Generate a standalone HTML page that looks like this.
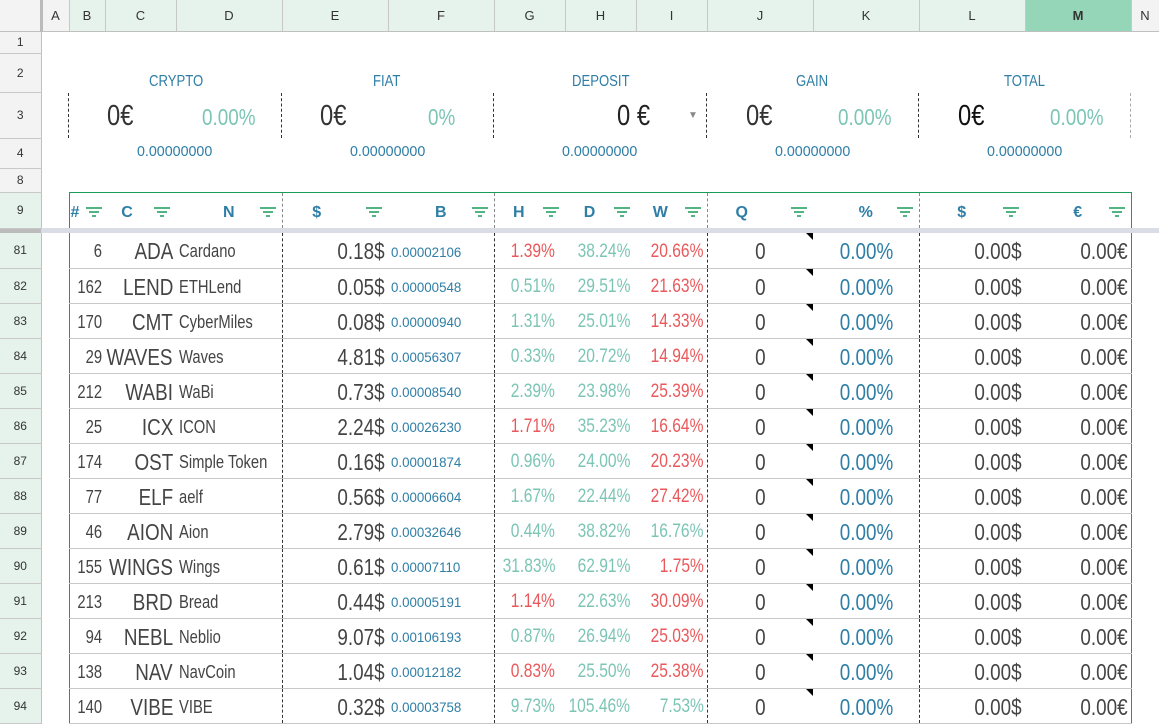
<!DOCTYPE html>
<html><head><meta charset="utf-8"><style>
*{box-sizing:border-box;margin:0;padding:0}
body{width:1159px;height:710px;overflow:hidden;background:#fff;font-family:"Liberation Sans",sans-serif;color:#444;position:relative}
table{border-collapse:collapse;table-layout:fixed;width:1159px}
td{padding:0 3px;white-space:nowrap;overflow:visible;vertical-align:middle}
i{font-style:normal;display:inline-block;transform:scaleX(.82)}
.r i{transform-origin:right center;margin-left:-40px}.l i{transform-origin:left center}.ce i{transform-origin:center}
.ch td{height:31px;background:#e6f3ec;border-right:1px solid #c8c8c8;border-bottom:1px solid #c0c0c0;text-align:center;font-size:13px;color:#333}
.ch td.g{background:#f3f3f3}
.ch td.m{background:#96d6b8;font-weight:bold}
td.rh{background:#f3f3f3;border-right:1px solid #c0c0c0;border-bottom:1px solid #c8c8c8;text-align:center;font-size:12px;color:#333;padding:0}
td.rg{background:#e6f3ec}
.dl{border-left:1px dashed #333}
.hd td.h{color:#2e7ea6;font-weight:bold;font-size:16px;text-align:center;position:relative;border-top:1px solid #1a9c5a;padding-top:6px}
.f{display:inline-block;width:16px;height:10px;position:absolute;right:6px;top:14px}
.d td.c{border-bottom:1px solid #c8c8c8;font-size:23px;padding-top:3px}
.r{text-align:right}.l{text-align:left}.ce{text-align:center}
.b{font-size:14px!important;color:#2e7ea6}
.b i{transform:scaleX(.95)}
.n{font-size:18px!important}
.gr{color:#7cc5b5;font-size:19px!important}
.rd{color:#e9595b;font-size:19px!important}
.bl{color:#2e7ea6}
.gl{border-left:1px solid #1a9c5a}
.gR{border-right:1px solid #1a9c5a}
.tri{position:relative}
.tri:after{content:"";position:absolute;right:0;top:0;border-top:7px solid #000;border-left:7px solid transparent}
.a{position:absolute;white-space:nowrap}
.a i{transform-origin:left center}
.lb{color:#2e7ea6;font-size:16px;top:73px}
.bg{font-size:29px;color:#333;top:100px}
.tp{font-size:23px;color:#7cc5b5;top:104px}
.sm{font-size:15px;color:#2e7ea6;top:143px}
.sm i{transform:scaleX(.95)}
.vd{position:absolute;top:93px;height:45px;border-left:1px dashed #333}
.g12{padding-right:10px!important}.h7{padding-right:6px!important}
</style></head><body>
<svg width="0" height="0" style="position:absolute"><defs><g id="fi"><path d="M0 1h16M3 5h10M6 9h4" stroke="#1a9c5a" stroke-width="1.6"/></g></defs></svg>
<table>
<colgroup><col style="width:41px"><col style="width:28px"><col style="width:36px"><col style="width:71px"><col style="width:106px"><col style="width:106px"><col style="width:106px"><col style="width:71px"><col style="width:71px"><col style="width:71px"><col style="width:106px"><col style="width:106px"><col style="width:106px"><col style="width:106px"><col style="width:28px"></colgroup>
<tr class="ch"><td class="g" style="border-right:3px solid #bbb"></td><td class="g">A</td><td>B</td><td>C</td><td>D</td><td>E</td><td>F</td><td>G</td><td>H</td><td>I</td><td>J</td><td>K</td><td>L</td><td class="m">M</td><td class="g">N</td></tr>
<tr style="height:22px"><td class="rh">1</td><td colspan="14"></td></tr>
<tr style="height:39px"><td class="rh">2</td><td colspan="14"></td></tr>
<tr style="height:46px"><td class="rh">3</td><td colspan="14"></td></tr>
<tr style="height:30px"><td class="rh">4</td><td colspan="14"></td></tr>
<tr style="height:24px"><td class="rh">8</td><td colspan="14"></td></tr>
<tr class="hd" style="height:36px"><td class="rh rg">9</td><td></td>
<td class="h gl" style="text-align:left;padding-left:1px">#<svg class="f" style="right:3px" viewBox="0 0 16 10"><use href="#fi"/></svg></td>
<td class="h" style="padding-right:30px">C<svg class="f" viewBox="0 0 16 10"><use href="#fi"/></svg></td>
<td class="h">N<svg class="f" viewBox="0 0 16 10"><use href="#fi"/></svg></td>
<td class="h dl" style="border-left-color:#888;padding-right:40px">$<svg class="f" viewBox="0 0 16 10"><use href="#fi"/></svg></td>
<td class="h">B<svg class="f" viewBox="0 0 16 10"><use href="#fi"/></svg></td>
<td class="h dl" style="border-left-color:#888;padding-right:25px">H<svg class="f" viewBox="0 0 16 10"><use href="#fi"/></svg></td>
<td class="h" style="padding-right:25px">D<svg class="f" viewBox="0 0 16 10"><use href="#fi"/></svg></td>
<td class="h" style="padding-right:25px">W<svg class="f" viewBox="0 0 16 10"><use href="#fi"/></svg></td>
<td class="h dl" style="border-left-color:#888;padding-right:40px">Q<svg class="f" viewBox="0 0 16 10"><use href="#fi"/></svg></td>
<td class="h">%<svg class="f" viewBox="0 0 16 10"><use href="#fi"/></svg></td>
<td class="h dl" style="border-left-color:#888;padding-right:24px">$<svg class="f" viewBox="0 0 16 10"><use href="#fi"/></svg></td>
<td class="h gR">€<svg class="f" viewBox="0 0 16 10"><use href="#fi"/></svg></td>
<td></td></tr>
<tr style="height:5px"><td style="background:#bbb;padding:0"></td><td colspan="14" style="background:#dadce6;padding:0"></td></tr>
</table>

<div class="a lb" style="left:149px"><i>CRYPTO</i></div>
<div class="a lb" style="left:373px"><i>FIAT</i></div>
<div class="a lb" style="left:572px"><i>DEPOSIT</i></div>
<div class="a lb" style="left:796px"><i>GAIN</i></div>
<div class="a lb" style="left:1004px"><i>TOTAL</i></div>
<div class="vd" style="left:68px"></div><div class="vd" style="left:281px"></div><div class="vd" style="left:493px"></div><div class="vd" style="left:706px"></div><div class="vd" style="left:918px"></div><div class="vd" style="left:1130px;border-left-color:#aaa"></div>
<div class="a bg" style="left:107px"><i>0€</i></div><div class="a tp" style="left:202px"><i>0.00%</i></div>
<div class="a bg" style="left:320px"><i>0€</i></div><div class="a tp" style="left:428px"><i>0%</i></div>
<div class="a bg" style="left:617px;color:#222"><i>0 €</i></div><div class="a" style="left:688px;top:110px;font-size:10px;color:#888">▼</div>
<div class="a bg" style="left:746px"><i>0€</i></div><div class="a tp" style="left:838px"><i>0.00%</i></div>
<div class="a bg" style="left:958px;color:#111"><i>0€</i></div><div class="a tp" style="left:1050px"><i>0.00%</i></div>
<div class="a sm" style="left:137px"><i>0.00000000</i></div>
<div class="a sm" style="left:350px"><i>0.00000000</i></div>
<div class="a sm" style="left:562px"><i>0.00000000</i></div>
<div class="a sm" style="left:775px"><i>0.00000000</i></div>
<div class="a sm" style="left:987px"><i>0.00000000</i></div>

<table class="d">
<colgroup><col style="width:41px"><col style="width:28px"><col style="width:36px"><col style="width:71px"><col style="width:106px"><col style="width:106px"><col style="width:106px"><col style="width:71px"><col style="width:71px"><col style="width:71px"><col style="width:106px"><col style="width:106px"><col style="width:106px"><col style="width:106px"><col style="width:28px"></colgroup>
<tbody>
<tr style="height:35px"><td class="rh rg">81</td><td></td><td class="c r n gl"><i>6</i></td><td class="c r"><i>ADA</i></td><td class="c l n"><i>Cardano</i></td><td class="c r dl"><i>0.18$</i></td><td class="c l b"><i>0.00002106</i></td><td class="c r rd dl g12"><i>1.39%</i></td><td class="c r gr h7"><i>38.24%</i></td><td class="c r rd"><i>20.66%</i></td><td class="c ce dl tri"><i>0</i></td><td class="c r bl" style="padding-right:25px"><i>0.00%</i></td><td class="c r dl"><i>0.00$</i></td><td class="c r gR"><i>0.00€</i></td><td></td></tr>
<tr style="height:35px"><td class="rh rg">82</td><td></td><td class="c r n gl"><i>162</i></td><td class="c r"><i>LEND</i></td><td class="c l n"><i>ETHLend</i></td><td class="c r dl"><i>0.05$</i></td><td class="c l b"><i>0.00000548</i></td><td class="c r gr dl g12"><i>0.51%</i></td><td class="c r gr h7"><i>29.51%</i></td><td class="c r rd"><i>21.63%</i></td><td class="c ce dl tri"><i>0</i></td><td class="c r bl" style="padding-right:25px"><i>0.00%</i></td><td class="c r dl"><i>0.00$</i></td><td class="c r gR"><i>0.00€</i></td><td></td></tr>
<tr style="height:35px"><td class="rh rg">83</td><td></td><td class="c r n gl"><i>170</i></td><td class="c r"><i>CMT</i></td><td class="c l n"><i>CyberMiles</i></td><td class="c r dl"><i>0.08$</i></td><td class="c l b"><i>0.00000940</i></td><td class="c r gr dl g12"><i>1.31%</i></td><td class="c r gr h7"><i>25.01%</i></td><td class="c r rd"><i>14.33%</i></td><td class="c ce dl tri"><i>0</i></td><td class="c r bl" style="padding-right:25px"><i>0.00%</i></td><td class="c r dl"><i>0.00$</i></td><td class="c r gR"><i>0.00€</i></td><td></td></tr>
<tr style="height:35px"><td class="rh rg">84</td><td></td><td class="c r n gl"><i>29</i></td><td class="c r"><i>WAVES</i></td><td class="c l n"><i>Waves</i></td><td class="c r dl"><i>4.81$</i></td><td class="c l b"><i>0.00056307</i></td><td class="c r gr dl g12"><i>0.33%</i></td><td class="c r gr h7"><i>20.72%</i></td><td class="c r rd"><i>14.94%</i></td><td class="c ce dl tri"><i>0</i></td><td class="c r bl" style="padding-right:25px"><i>0.00%</i></td><td class="c r dl"><i>0.00$</i></td><td class="c r gR"><i>0.00€</i></td><td></td></tr>
<tr style="height:35px"><td class="rh rg">85</td><td></td><td class="c r n gl"><i>212</i></td><td class="c r"><i>WABI</i></td><td class="c l n"><i>WaBi</i></td><td class="c r dl"><i>0.73$</i></td><td class="c l b"><i>0.00008540</i></td><td class="c r gr dl g12"><i>2.39%</i></td><td class="c r gr h7"><i>23.98%</i></td><td class="c r rd"><i>25.39%</i></td><td class="c ce dl tri"><i>0</i></td><td class="c r bl" style="padding-right:25px"><i>0.00%</i></td><td class="c r dl"><i>0.00$</i></td><td class="c r gR"><i>0.00€</i></td><td></td></tr>
<tr style="height:35px"><td class="rh rg">86</td><td></td><td class="c r n gl"><i>25</i></td><td class="c r"><i>ICX</i></td><td class="c l n"><i>ICON</i></td><td class="c r dl"><i>2.24$</i></td><td class="c l b"><i>0.00026230</i></td><td class="c r rd dl g12"><i>1.71%</i></td><td class="c r gr h7"><i>35.23%</i></td><td class="c r rd"><i>16.64%</i></td><td class="c ce dl tri"><i>0</i></td><td class="c r bl" style="padding-right:25px"><i>0.00%</i></td><td class="c r dl"><i>0.00$</i></td><td class="c r gR"><i>0.00€</i></td><td></td></tr>
<tr style="height:35px"><td class="rh rg">87</td><td></td><td class="c r n gl"><i>174</i></td><td class="c r"><i>OST</i></td><td class="c l n"><i>Simple Token</i></td><td class="c r dl"><i>0.16$</i></td><td class="c l b"><i>0.00001874</i></td><td class="c r gr dl g12"><i>0.96%</i></td><td class="c r gr h7"><i>24.00%</i></td><td class="c r rd"><i>20.23%</i></td><td class="c ce dl tri"><i>0</i></td><td class="c r bl" style="padding-right:25px"><i>0.00%</i></td><td class="c r dl"><i>0.00$</i></td><td class="c r gR"><i>0.00€</i></td><td></td></tr>
<tr style="height:35px"><td class="rh rg">88</td><td></td><td class="c r n gl"><i>77</i></td><td class="c r"><i>ELF</i></td><td class="c l n"><i>aelf</i></td><td class="c r dl"><i>0.56$</i></td><td class="c l b"><i>0.00006604</i></td><td class="c r gr dl g12"><i>1.67%</i></td><td class="c r gr h7"><i>22.44%</i></td><td class="c r rd"><i>27.42%</i></td><td class="c ce dl tri"><i>0</i></td><td class="c r bl" style="padding-right:25px"><i>0.00%</i></td><td class="c r dl"><i>0.00$</i></td><td class="c r gR"><i>0.00€</i></td><td></td></tr>
<tr style="height:35px"><td class="rh rg">89</td><td></td><td class="c r n gl"><i>46</i></td><td class="c r"><i>AION</i></td><td class="c l n"><i>Aion</i></td><td class="c r dl"><i>2.79$</i></td><td class="c l b"><i>0.00032646</i></td><td class="c r gr dl g12"><i>0.44%</i></td><td class="c r gr h7"><i>38.82%</i></td><td class="c r gr"><i>16.76%</i></td><td class="c ce dl tri"><i>0</i></td><td class="c r bl" style="padding-right:25px"><i>0.00%</i></td><td class="c r dl"><i>0.00$</i></td><td class="c r gR"><i>0.00€</i></td><td></td></tr>
<tr style="height:35px"><td class="rh rg">90</td><td></td><td class="c r n gl"><i>155</i></td><td class="c r"><i>WINGS</i></td><td class="c l n"><i>Wings</i></td><td class="c r dl"><i>0.61$</i></td><td class="c l b"><i>0.00007110</i></td><td class="c r gr dl g12"><i>31.83%</i></td><td class="c r gr h7"><i>62.91%</i></td><td class="c r rd"><i>1.75%</i></td><td class="c ce dl tri"><i>0</i></td><td class="c r bl" style="padding-right:25px"><i>0.00%</i></td><td class="c r dl"><i>0.00$</i></td><td class="c r gR"><i>0.00€</i></td><td></td></tr>
<tr style="height:35px"><td class="rh rg">91</td><td></td><td class="c r n gl"><i>213</i></td><td class="c r"><i>BRD</i></td><td class="c l n"><i>Bread</i></td><td class="c r dl"><i>0.44$</i></td><td class="c l b"><i>0.00005191</i></td><td class="c r rd dl g12"><i>1.14%</i></td><td class="c r gr h7"><i>22.63%</i></td><td class="c r rd"><i>30.09%</i></td><td class="c ce dl tri"><i>0</i></td><td class="c r bl" style="padding-right:25px"><i>0.00%</i></td><td class="c r dl"><i>0.00$</i></td><td class="c r gR"><i>0.00€</i></td><td></td></tr>
<tr style="height:35px"><td class="rh rg">92</td><td></td><td class="c r n gl"><i>94</i></td><td class="c r"><i>NEBL</i></td><td class="c l n"><i>Neblio</i></td><td class="c r dl"><i>9.07$</i></td><td class="c l b"><i>0.00106193</i></td><td class="c r gr dl g12"><i>0.87%</i></td><td class="c r gr h7"><i>26.94%</i></td><td class="c r rd"><i>25.03%</i></td><td class="c ce dl tri"><i>0</i></td><td class="c r bl" style="padding-right:25px"><i>0.00%</i></td><td class="c r dl"><i>0.00$</i></td><td class="c r gR"><i>0.00€</i></td><td></td></tr>
<tr style="height:35px"><td class="rh rg">93</td><td></td><td class="c r n gl"><i>138</i></td><td class="c r"><i>NAV</i></td><td class="c l n"><i>NavCoin</i></td><td class="c r dl"><i>1.04$</i></td><td class="c l b"><i>0.00012182</i></td><td class="c r rd dl g12"><i>0.83%</i></td><td class="c r gr h7"><i>25.50%</i></td><td class="c r rd"><i>25.38%</i></td><td class="c ce dl tri"><i>0</i></td><td class="c r bl" style="padding-right:25px"><i>0.00%</i></td><td class="c r dl"><i>0.00$</i></td><td class="c r gR"><i>0.00€</i></td><td></td></tr>
<tr style="height:35px"><td class="rh rg">94</td><td></td><td class="c r n gl"><i>140</i></td><td class="c r"><i>VIBE</i></td><td class="c l n"><i>VIBE</i></td><td class="c r dl"><i>0.32$</i></td><td class="c l b"><i>0.00003758</i></td><td class="c r gr dl g12"><i>9.73%</i></td><td class="c r gr h7"><i>105.46%</i></td><td class="c r gr"><i>7.53%</i></td><td class="c ce dl tri"><i>0</i></td><td class="c r bl" style="padding-right:25px"><i>0.00%</i></td><td class="c r dl"><i>0.00$</i></td><td class="c r gR"><i>0.00€</i></td><td></td></tr>
</tbody></table>
</body></html>
